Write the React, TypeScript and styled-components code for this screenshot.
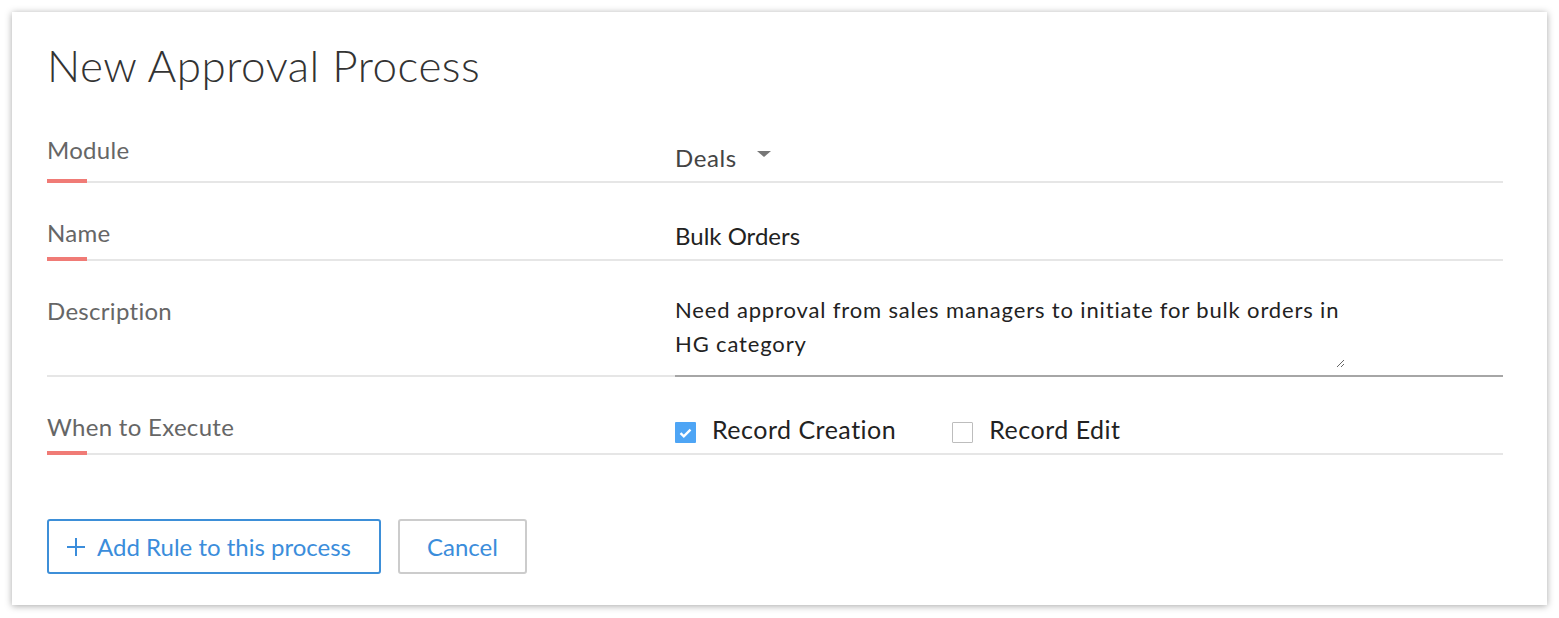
import { createGlobalStyle } from "styled-components"
import styled from "styled-components"

const GlobalStyle = createGlobalStyle`
  body {
    margin: 0;
    background: #ffffff;
    font-family: Lato, "Open Sans", sans-serif;
  }
`

const Card = styled.div`
  margin: 12px;
  width: 1535px;
  height: 593px;
  box-sizing: border-box;
  padding: 31px 44px 0 35px;
  background: #ffffff;
  box-shadow: 0 1px 7px rgba(0, 0, 0, 0.35);
`

const Title = styled.h1`
  margin: 0 0 13px;
  font-size: 44px;
  line-height: 44px;
  font-weight: 300;
  letter-spacing: 0.5px;
  color: #333333;
`

const Row = styled.div`
  display: grid;
  grid-template-columns: 628px 1fr;
`

const Label = styled.div<{ $required?: boolean; $tail?: number }>`
  position: relative;
  padding: 37px 0 ${(p) => p.$tail ?? 13}px;
  font-size: 24px;
  line-height: 26px;
  letter-spacing: 0.3px;
  color: #666666;
  border-bottom: 2px solid #e6e6e6;

  &::after {
    content: "";
    display: ${(p) => (p.$required ? "block" : "none")};
    position: absolute;
    left: 0;
    bottom: -2px;
    width: 40px;
    height: 4px;
    background: #f07b76;
  }
`

const Value = styled.div<{ $dark?: boolean }>`
  display: flex;
  align-items: flex-end;
  padding-bottom: 10px;
  font-size: 24px;
  line-height: 26px;
  color: ${(p) => (p.$dark ? "#222222" : "#444444")};
  border-bottom: 2px solid #e6e6e6;
`

const Select = styled.span`
  display: flex;
  align-items: flex-end;
  letter-spacing: 0.6px;
`

const Caret = styled.span`
  width: 0;
  height: 0;
  margin: 0 0 14px 20px;
  border-left: 7px solid transparent;
  border-right: 7px solid transparent;
  border-top: 6px solid #777777;
`

const TextBox = styled.div`
  padding: 32px 0 7px;
  border-bottom: 2px solid #a6a6a6;
`

const Notes = styled.textarea`
  display: block;
  width: 670px;
  height: 75px;
  padding: 0;
  margin: 0;
  border: none;
  outline: none;
  font-family: Lato, "Open Sans", sans-serif;
  font-size: 22px;
  line-height: 34px;
  letter-spacing: 0.85px;
  color: #222222;
  background: transparent;
`

const Checks = styled.div`
  display: flex;
  align-items: center;
  gap: 56px;
`

const Check = styled.label`
  display: flex;
  align-items: center;
  gap: 16px;
  font-size: 25px;
  letter-spacing: 0.5px;
  color: #222222;
`

const Box = styled.span<{ $on?: boolean }>`
  width: 21px;
  height: 21px;
  box-sizing: border-box;
  border-radius: 1px;
  display: flex;
  align-items: center;
  justify-content: center;
  background: ${(p) => (p.$on ? "#4ea5f5" : "#ffffff")};
  border: ${(p) => (p.$on ? "none" : "1px solid #bdbdbd")};
  margin-top: 7px;
`

const Actions = styled.div`
  display: flex;
  gap: 17px;
  margin-top: 64px;
`

const Button = styled.button<{ $primary?: boolean }>`
  height: 55px;
  box-sizing: border-box;
  display: flex;
  align-items: center;
  gap: 12px;
  padding: 0 ${(p) => (p.$primary ? "28px" : "27px")} 0 ${(p) => (p.$primary ? "18px" : "27px")};
  background: #ffffff;
  border: 2px solid ${(p) => (p.$primary ? "#3d8fd8" : "#cccccc")};
  border-radius: 3px;
  font-family: Lato, "Open Sans", sans-serif;
  font-size: 24px;
  color: #3b8ddb;
  cursor: pointer;
`

export default function App() {
  return (
    <>
      <GlobalStyle />
      <Card>
        <Title>New Approval Process</Title>
        <Row>
          <Label $required $tail={18}>
            Module
          </Label>
          <Value>
            <Select>
              Deals
              <Caret />
            </Select>
          </Value>
        </Row>
        <Row>
          <Label $required>Name</Label>
          <Value $dark>Bulk Orders</Value>
        </Row>
        <Row>
          <Label>Description</Label>
          <TextBox>
            <Notes defaultValue="Need approval from sales managers to initiate for bulk orders in HG category" />
          </TextBox>
        </Row>
        <Row>
          <Label $required>When to Execute</Label>
          <Value>
            <Checks>
              <Check>
                <Box $on>
                  <svg width="13" height="10" viewBox="0 0 13 10">
                    <path d="M1.5 5.2 L4.8 8.3 L11.5 1.7" fill="none" stroke="#ffffff" strokeWidth="2.4" />
                  </svg>
                </Box>
                Record Creation
              </Check>
              <Check>
                <Box />
                Record Edit
              </Check>
            </Checks>
          </Value>
        </Row>
        <Actions>
          <Button $primary>
            <svg width="18" height="18" viewBox="0 0 18 18">
              <path d="M9 0 V18 M0 9 H18" stroke="#3b8ddb" strokeWidth="2" />
            </svg>
            Add Rule to this process
          </Button>
          <Button>Cancel</Button>
        </Actions>
      </Card>
    </>
  )
}
